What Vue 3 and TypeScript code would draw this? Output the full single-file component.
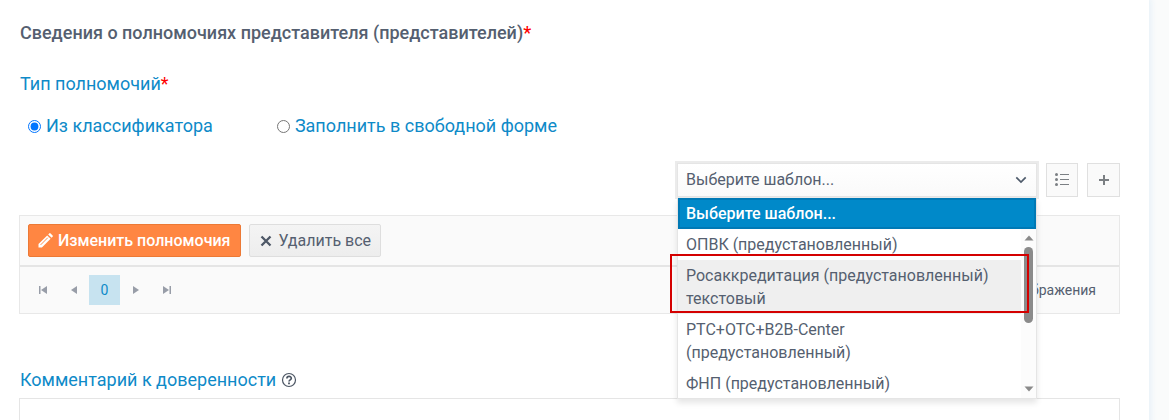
<script setup lang="ts">
import { ref } from 'vue'

interface Template {
  id: string
  name: string
}

const templates: Template[] = [
  { id: 'opvk', name: 'ОПВК (предустановленный)' },
  { id: 'rosakkr', name: 'Росаккредитация (предустановленный) текстовый' },
  { id: 'rts', name: 'РТС+ОТС+B2B-Center (предустановленный)' },
  { id: 'fnp', name: 'ФНП (предустановленный)' },
]

const kind = ref<'classifier' | 'free'>('classifier')
const template = ref('')
const hovered = ref('rosakkr')
const comment = ref('')
</script>

<template>
  <div class="page">
    <main class="sheet">
      <h2 class="title">Сведения о полномочиях представителя (представителей)<span class="req">*</span></h2>

      <fieldset class="kinds">
        <legend class="label">Тип полномочий<span class="req">*</span></legend>
        <div class="radios">
          <label class="radio"><input v-model="kind" type="radio" name="kind" value="classifier" />Из классификатора</label>
          <label class="radio"><input v-model="kind" type="radio" name="kind" value="free" />Заполнить в свободной форме</label>
        </div>
      </fieldset>

      <div class="picker-row">
        <div class="picker">
          <select v-model="template" class="select" aria-label="Шаблон">
            <option value="">Выберите шаблон...</option>
            <option v-for="t in templates" :key="t.id" :value="t.id">{{ t.name }}</option>
          </select>
          <svg class="chevron" viewBox="0 0 12 8" width="12" height="8"><path d="M1.3 1.3 6 6l4.700-4.700" fill="none" stroke="#4f5b6b" stroke-width="1.700" /></svg>
          <div class="menu">
            <div class="option chosen">Выберите шаблон...</div>
            <div class="scroller">
              <div class="options">
                <div
                  v-for="t in templates"
                  :key="t.id"
                  class="option"
                  :class="{ hovered: hovered === t.id }"
                  @mouseenter="hovered = t.id"
                >{{ t.name }}</div>
              </div>
              <div class="scrollbar">
                <svg viewBox="0 0 10 6" width="10" height="6"><path d="M5 0.500 9.500 5.500h-9z" fill="#8a8a8a" /></svg>
                <div class="thumb"></div>
                <svg viewBox="0 0 10 6" width="10" height="6"><path d="M5 5.500 9.500 0.500h-9z" fill="#8a8a8a" /></svg>
              </div>
            </div>
          </div>
          <div class="marker"></div>
        </div>
        <button class="square" type="button" aria-label="Список">
          <svg viewBox="0 0 16 14" width="16" height="14">
            <g fill="#7b7f83"><circle cx="2.500" cy="1.500" r="1.500" /><circle cx="2.500" cy="6.500" r="1.500" /><circle cx="2.500" cy="11.500" r="1.500" /></g>
            <path d="M6 1.500h9M6 6.500h9M6 11.500h9" stroke="#7b7f83" />
          </svg>
        </button>
        <button class="square" type="button" aria-label="Добавить">
          <svg viewBox="0 0 12 12" width="12" height="12"><path d="M6 1v10M1 6h10" stroke="#7b7f83" stroke-width="2" /></svg>
        </button>
      </div>

      <section class="grid">
        <div class="toolbar">
          <button class="btn primary" type="button">
            <svg viewBox="0 0 15 15" width="15" height="15">
              <path d="M0.500 14.500v-3.400L9.200 2.400l3.400 3.400-8.700 8.700zM10.200 1.400l1-1q.7-.6 1.400 0l2 2q.6.700 0 1.400l-1 1z" fill="#fff" />
              <path d="M2.600 11.900 9.800 4.700" stroke="#ff8a45" stroke-width="1" />
            </svg>
            Изменить полномочия
          </button>
          <button class="btn" type="button">
            <svg viewBox="0 0 12 12" width="12" height="12"><path d="m1.500 1.500 9 9M10.500 1.500l-9 9" stroke="#4d5766" stroke-width="2.300" /></svg>
            Удалить все
          </button>
        </div>
        <div class="pager">
          <button class="page-btn" type="button" aria-label="Первая"><svg viewBox="0 0 8 8" width="8" height="8"><path d="M0 0h1.500v8H0zM8 0v8L2 4z" fill="#989da8" /></svg></button>
          <button class="page-btn" type="button" aria-label="Назад"><svg viewBox="0 0 8 8" width="8" height="8"><path d="M7 0v8L1 4z" fill="#989da8" /></svg></button>
          <button class="page-btn current" type="button">0</button>
          <button class="page-btn" type="button" aria-label="Вперёд"><svg viewBox="0 0 8 8" width="8" height="8"><path d="M1 0v8l6-4z" fill="#989da8" /></svg></button>
          <button class="page-btn" type="button" aria-label="Последняя"><svg viewBox="0 0 8 8" width="8" height="8"><path d="M6.500 0H8v8H6.500zM0 0v8l6-4z" fill="#989da8" /></svg></button>
          <span class="empty">отображения</span>
        </div>
      </section>

      <div class="comment-label">
        <label class="label" for="comment">Комментарий к доверенности</label>
        <svg viewBox="0 0 16 16" width="16" height="16">
          <circle cx="8" cy="8" r="6.500" fill="none" stroke="#4b5563" stroke-width="1.200" />
          <path d="M5.900 6.500c0-2.800 4.400-2.700 4.400-.2C10.300 8 8 7.800 8 9.600" fill="none" stroke="#4b5563" stroke-width="1.700" />
          <path d="M7.100 10.500h1.800v1.700H7.100z" fill="#4b5563" />
        </svg>
      </div>
      <textarea id="comment" v-model="comment" class="comment"></textarea>
    </main>
  </div>
</template>

<style>
body {
  background: #fafbfb;
}
</style>

<style scoped>
.page {
  box-sizing: border-box;
  height: 100vh;
  overflow: hidden;
  padding-right: 20px;
  font: 16px/23px Roboto, "Liberation Sans", sans-serif;
  color: #555f70;
}
.page * {
  box-sizing: border-box;
}
.sheet {
  min-height: 100%;
  padding: 20px 29px 0 19px;
  background: #fff;
  box-shadow: 0 0 6px 2px #e6f0f8;
}
.title {
  margin: 0;
  padding-left: 1px;
  font-size: 18px;
  line-height: 26px;
  font-weight: 500;
}
.req {
  color: #f00;
}
.kinds {
  margin: 25px 0 0;
  padding: 0 0 0 1px;
  border: 0;
}
.label {
  padding: 0;
  font-size: 18px;
  line-height: 26px;
  color: #0e8ac8;
}
.radios {
  display: flex;
  gap: 64px;
  padding-left: 8px;
  margin-top: 16px;
}
.radio {
  display: flex;
  align-items: center;
  gap: 5px;
  font-size: 18px;
  line-height: 26px;
  color: #0e8ac8;
}
.radio input {
  width: 13px;
  height: 13px;
  margin: 0;
}
.picker-row {
  display: flex;
  justify-content: flex-end;
  gap: 9px;
  margin-top: 24px;
}
.picker {
  position: relative;
  width: 360px;
}
.select {
  display: block;
  width: 100%;
  height: 34px;
  padding: 0 8px 2px;
  border: 1px solid #e5e5e5;
  border-radius: 0;
  outline: 2px solid #ebebeb;
  background: linear-gradient(#fff, #fafafa);
  appearance: none;
  font: inherit;
  color: inherit;
}
.chevron {
  position: absolute;
  top: 13px;
  right: 10px;
  pointer-events: none;
}
.menu {
  position: absolute;
  z-index: 1;
  top: 35px;
  left: 0;
  width: 100%;
  border: 1px solid #e5e5e5;
  border-top: 0;
  background: #fff;
  box-shadow: 0 4px 6px rgba(0, 0, 0, 0.1);
}
.option {
  padding: 4px 8px;
}
.option.chosen {
  padding: 2px 6px;
  border: 2px solid #0079b5;
  background: #0089c9;
  color: #fff;
  font-weight: 500;
}
.option.hovered {
  background: #efefef;
}
.scroller {
  display: flex;
  height: 169px;
  overflow: hidden;
}
.options {
  flex: 1;
}
.scrollbar {
  display: flex;
  flex-direction: column;
  align-items: center;
  width: 15px;
  padding: 6px 0;
  background: #fcfcfc;
}
.thumb {
  width: 9px;
  height: 76px;
  margin: 6px 0 auto;
  border-radius: 5px;
  background: #8b8b8b;
}
.marker {
  position: absolute;
  z-index: 2;
  top: 91px;
  left: -7px;
  width: 359px;
  height: 59px;
  border: 2px solid #d40000;
  pointer-events: none;
}
.square {
  display: flex;
  align-items: center;
  justify-content: center;
  width: 33px;
  height: 34px;
  padding: 0;
  border: 1px solid #e0e0e0;
  background: #fafafa;
}
.square:first-of-type {
  width: 32px;
}
.grid {
  margin-top: 18px;
  border: 1px solid #e8e8e8;
  background: #fafafa;
}
.toolbar {
  display: flex;
  gap: 8px;
  padding: 8px;
  border-bottom: 2px solid #e5e5e5;
}
.btn {
  display: flex;
  align-items: center;
  gap: 6px;
  height: 33px;
  padding: 0 9px 0 10px;
  border: 1px solid #dedede;
  border-radius: 2px;
  background: linear-gradient(#f4f4f4, #ededed);
  font: inherit;
  color: inherit;
}
.btn.primary {
  gap: 5px;
  padding: 0 10px 0 9px;
  border-color: #ec7935;
  background: #ff8642;
  color: #fff;
  font-weight: 500;
}
.pager {
  display: flex;
  align-items: center;
  padding: 8px 23px 8px 7px;
  font-size: 14px;
}
.page-btn {
  display: flex;
  align-items: center;
  justify-content: center;
  width: 31px;
  height: 30px;
  padding: 0;
  border: 0;
  background: none;
  font: inherit;
}
.page-btn.current {
  background: #c7e3f0;
  color: #0e8ac8;
}
.empty {
  margin-left: auto;
}
.comment-label {
  display: flex;
  align-items: center;
  gap: 5px;
  margin-top: 53px;
  padding-left: 1px;
}
.comment {
  display: block;
  width: 100%;
  height: 80px;
  margin-top: 5px;
  padding: 8px;
  border: 1px solid #e5e5e5;
  resize: none;
  font: inherit;
  color: inherit;
}
</style>
